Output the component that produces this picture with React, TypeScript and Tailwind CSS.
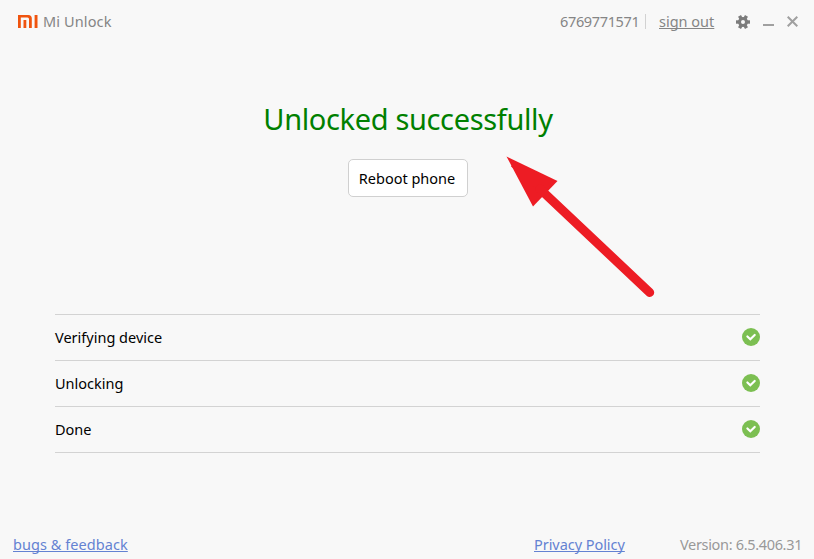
const steps = ["Verifying device", "Unlocking", "Done"];

function MiLogo() {
  return (
    <svg width="20" height="13" viewBox="0 0 20 13" fill="#f0540f">
      <path d="M0 0h10.3Q13.8 0 13.8 3.5V13H11V4Q11 2.5 9.5 2.5H2.8V13H0z" />
      <path d="M5.5 5h2.8v8H5.5zM16.6 0h2.9v13h-2.9z" />
    </svg>
  );
}

function GearIcon() {
  return (
    <svg width="14" height="14" viewBox="-7 -7 14 14">
      <g fill="#7c7c7c">
        <rect x="-7" y="-1.7" width="14" height="3.4" />
        <rect x="-7" y="-1.7" width="14" height="3.4" transform="rotate(60)" />
        <rect x="-7" y="-1.7" width="14" height="3.4" transform="rotate(120)" />
      </g>
      <circle r="3.5" fill="#f8f8f8" stroke="#7c7c7c" strokeWidth="3" />
    </svg>
  );
}

function CheckBadge() {
  return (
    <svg width="18" height="18" viewBox="0 0 18 18" fill="none">
      <circle cx="9" cy="9" r="9" fill="#7cbf52" />
      <path d="M5.4 8.5l2.9 2.7 4.4-4.2" stroke="#fff" strokeWidth="2.2" strokeLinecap="round" />
    </svg>
  );
}

function TitleBar() {
  return (
    <header className="flex h-[43px] items-center whitespace-nowrap pl-[18px] pr-[16px] text-[#858585]">
      <MiLogo />
      <h1 className="ml-[5px] pb-0.5 tracking-[0.12px]">Mi Unlock</h1>
      <div className="ml-auto flex items-center">
        <span className="w-[80px] pb-0.5 tracking-[-0.35px]">6769771571</span>
        <span className="ml-[5px] h-[15px] w-px bg-[#d2d2d2]" />
        <a
          href="#"
          className="ml-[13px] w-[55px] pb-0.5 underline underline-offset-1 [text-decoration-skip-ink:none]"
        >
          sign out
        </a>
        <button type="button" aria-label="Settings" className="ml-[22px]">
          <GearIcon />
        </button>
        <button type="button" aria-label="Minimize" className="ml-[13px]">
          <svg width="11" height="14" viewBox="0 0 11 14">
            <path d="M0 10h11" stroke="#a0a0a0" strokeWidth="2" />
          </svg>
        </button>
        <button type="button" aria-label="Close" className="ml-[13px]">
          <svg width="11" height="11" viewBox="0 0 11 11">
            <path d="M.7.7l9.6 9.6M10.3.7L.7 10.3" stroke="#a0a0a0" strokeWidth="2" />
          </svg>
        </button>
      </div>
    </header>
  );
}

export default function App() {
  return (
    <div className="relative flex h-[559px] w-[814px] flex-col overflow-hidden bg-[#f8f8f8] font-['Noto_Sans',sans-serif] text-[14.5px] leading-5 text-black">
      <TitleBar />

      <main className="flex grow flex-col px-[55px]">
        <section className="flex h-[271px] flex-col items-center pl-0.5 pt-[56px]">
          <h2 className="text-[29px] leading-10 tracking-[-0.35px] text-[#008000]">
            Unlocked successfully
          </h2>
          <button
            type="button"
            className="mt-[20px] h-[38px] w-[120px] rounded-[5px] border border-[#d0d0d0] bg-white pr-0.5"
          >
            Reboot phone
          </button>
        </section>

        <ul className="w-[705px] border-t border-[#d3d3d3]">
          {steps.map((step) => (
            <li
              key={step}
              className="flex h-[46px] items-center justify-between border-b border-[#d3d3d3] pb-0.5"
            >
              <span>{step}</span>
              <CheckBadge />
            </li>
          ))}
        </ul>
      </main>

      <footer className="flex h-[31px] items-center whitespace-nowrap px-[13px] text-[#6482d2]">
        <a
          href="#"
          className="tracking-[0.06px] underline underline-offset-1 [text-decoration-skip-ink:none]"
        >
          bugs &amp; feedback
        </a>
        <a
          href="#"
          className="ml-auto w-[91px] tracking-[-0.05px] underline underline-offset-1 [text-decoration-skip-ink:none]"
        >
          Privacy Policy
        </a>
        <span className="ml-[55px] w-[121px] tracking-[-0.33px] text-[#999]">
          Version: 6.5.406.31
        </span>
      </footer>

      {/* pointer towards the status message */}
      <svg
        className="pointer-events-none absolute left-[500px] top-[150px]"
        width="160"
        height="152"
        viewBox="0 0 160 152"
      >
        <path d="M6.5 6.5L57.5 31 33 56.5z" fill="#ed1c24" />
        <path d="M13 14L40 39" stroke="#ed1c24" strokeWidth="6" />
        <path d="M40 39L149.7 142.5" stroke="#ed1c24" strokeWidth="9" strokeLinecap="round" />
      </svg>
    </div>
  );
}
